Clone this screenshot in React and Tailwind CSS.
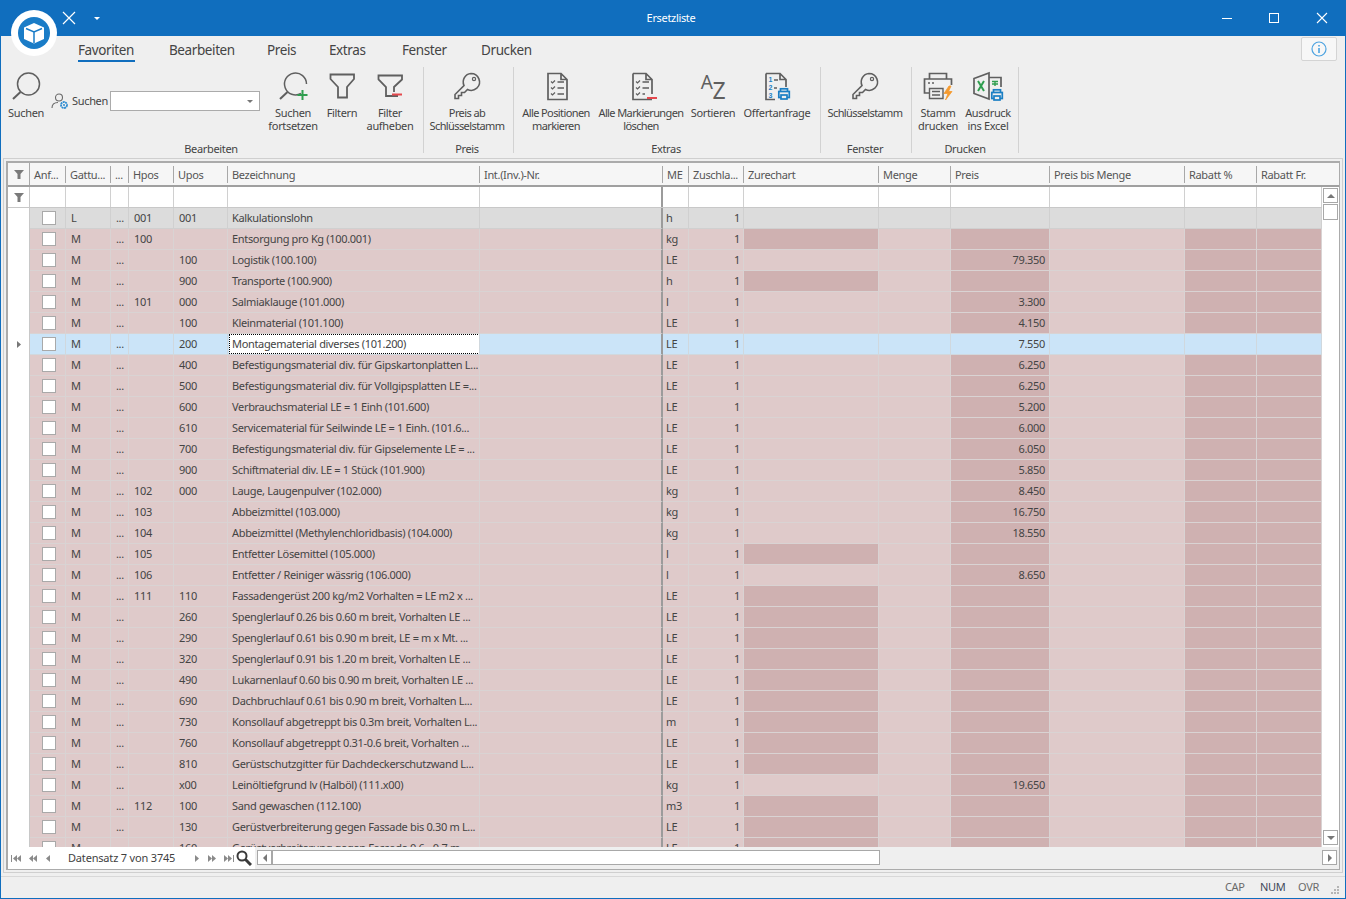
import React from 'react';

const COLS = 'grid-cols-[22px_36px_45px_18px_45px_54px_252px_183px_26px_55px_135px_72px_99px_135px_72px_65px]';

const HEADERS = ['Anf...', 'Gattu...', '...', 'Hpos', 'Upos', 'Bezeichnung', 'Int.(Inv.)-Nr.', 'ME', 'Zuschla...', 'Zurechart', 'Menge', 'Preis', 'Preis bis Menge', 'Rabatt %', 'Rabatt Fr.'];

// gattung, hpos, upos, bezeichnung, me, preis
const ROWS = [
  ['L', '001', '001', 'Kalkulationslohn', 'h', ''],
  ['M', '100', '', 'Entsorgung pro Kg (100.001)', 'kg', ''],
  ['M', '', '100', 'Logistik (100.100)', 'LE', '79.350'],
  ['M', '', '900', 'Transporte (100.900)', 'h', ''],
  ['M', '101', '000', 'Salmiaklauge (101.000)', 'l', '3.300'],
  ['M', '', '100', 'Kleinmaterial (101.100)', 'LE', '4.150'],
  ['M', '', '200', 'Montagematerial diverses (101.200)', 'LE', '7.550'],
  ['M', '', '400', 'Befestigungsmaterial div. für Gipskartonplatten L...', 'LE', '6.250'],
  ['M', '', '500', 'Befestigungsmaterial div. für Vollgipsplatten LE =...', 'LE', '6.250'],
  ['M', '', '600', 'Verbrauchsmaterial LE = 1 Einh (101.600)', 'LE', '5.200'],
  ['M', '', '610', 'Servicematerial für Seilwinde LE = 1 Einh. (101.6...', 'LE', '6.000'],
  ['M', '', '700', 'Befestigungsmaterial div. für Gipselemente LE = ...', 'LE', '6.050'],
  ['M', '', '900', 'Schiftmaterial div. LE = 1 Stück (101.900)', 'LE', '5.850'],
  ['M', '102', '000', 'Lauge, Laugenpulver (102.000)', 'kg', '8.450'],
  ['M', '103', '', 'Abbeizmittel (103.000)', 'kg', '16.750'],
  ['M', '104', '', 'Abbeizmittel (Methylenchloridbasis) (104.000)', 'kg', '18.550'],
  ['M', '105', '', 'Entfetter Lösemittel (105.000)', 'l', ''],
  ['M', '106', '', 'Entfetter / Reiniger wässrig (106.000)', 'l', '8.650'],
  ['M', '111', '110', 'Fassadengerüst 200 kg/m2 Vorhalten = LE m2 x ...', 'LE', ''],
  ['M', '', '260', 'Spenglerlauf 0.26 bis 0.60 m breit, Vorhalten LE ...', 'LE', ''],
  ['M', '', '290', 'Spenglerlauf 0.61 bis 0.90 m breit, LE = m x Mt. ...', 'LE', ''],
  ['M', '', '320', 'Spenglerlauf 0.91 bis 1.20 m breit, Vorhalten LE ...', 'LE', ''],
  ['M', '', '490', 'Lukarnenlauf 0.60 bis 0.90 m breit, Vorhalten LE ...', 'LE', ''],
  ['M', '', '690', 'Dachbruchlauf 0.61 bis 0.90 m breit, Vorhalten L...', 'LE', ''],
  ['M', '', '730', 'Konsollauf abgetreppt bis 0.3m breit, Vorhalten L...', 'm', ''],
  ['M', '', '760', 'Konsollauf abgetreppt 0.31-0.6 breit, Vorhalten ...', 'LE', ''],
  ['M', '', '810', 'Gerüstschutzgitter für Dachdeckerschutzwand L...', 'LE', ''],
  ['M', '', 'x00', 'Leinöltiefgrund lv (Halböl) (111.x00)', 'kg', '19.650'],
  ['M', '112', '100', 'Sand gewaschen (112.100)', 'm3', ''],
  ['M', '', '130', 'Gerüstverbreiterung gegen Fassade bis 0.30 m L...', 'LE', ''],
  ['M', '', '160', 'Gerüstverbreiterung gegen Fassade 0.6 - 0.7 m...', 'LE', ''],
];

const SELECTED = 6;

const Svg = ({ children, w = 32, h = 32, className = '' }) => (
  <svg width={w} height={h} viewBox={`0 0 ${w} ${h}`} fill="none" stroke="#5f5f5f" strokeWidth="1.5" className={className}>
    {children}
  </svg>
);

const SearchIcon = () => (
  <Svg>
    <circle cx="18.5" cy="14" r="11" />
    <path d="M10.5 22 3 29" strokeWidth="2" />
  </Svg>
);

const SearchPlusIcon = () => (
  <Svg>
    <path d="M24 23.5A11 11 0 1 1 29.5 14" />
    <path d="M10.5 22 3 29" strokeWidth="2" />
    <path d="M25.5 20v10M20.5 25h10" stroke="#2f9e4f" strokeWidth="2" />
  </Svg>
);

const FunnelIcon = () => (
  <Svg>
    <path d="M4.5 4.5H28V9L21 17V27.5H12V17L4.5 9Z" strokeWidth="1.8" />
  </Svg>
);

const FunnelMinusIcon = () => (
  <Svg>
    <path d="M27 25H15V16L7.5 8.5V4.5H31V8.5L23 16V21" strokeWidth="1.8" transform="translate(-3 1)" />
    <path d="M18 24.5H28" stroke="#e5484d" strokeWidth="2" />
  </Svg>
);

const KeyIcon = () => (
  <Svg>
    <path d="M20 3.5a8.5 8.5 0 0 1 5.8 14.700 8.5 8.5 0 0 1-9.300 1.300L13.500 22.500h-3v3h-3v3H4V24.500L13 15.500a8.500 8.500 0 0 1 7-12Z" strokeWidth="1.6" />
    <circle cx="23" cy="9" r="1.6" strokeWidth="1.2" />
  </Svg>
);

const DocShape = () => <path d="M8 3.5H21L27 9.5V29.5H8Z M21 3.5V9.5H27" strokeWidth="1.7" />;

const CheckLines = () => (
  <>
    <path d="M11 11.5l1.5 1.5 2.5-2.5M11 17.5l1.5 1.5 2.5-2.5M11 23.5l1.5 1.5 2.5-2.5" strokeWidth="1.2" />
    <path d="M17.5 12H24M17.5 18H24M17.5 24H24" />
  </>
);

const ChecklistIcon = () => (
  <Svg>
    <DocShape />
    <CheckLines />
  </Svg>
);

const ChecklistMinusIcon = () => (
  <Svg>
    <path d="M8 3.5H21L27 9.5V24 M27 29.5H8V3.5 M21 3.5V9.5H27" strokeWidth="1.7" />
    <path d="M11 11.5l1.5 1.5 2.5-2.5M11 17.5l1.5 1.5 2.5-2.5M11 23.5l1.5 1.5 2.5-2.5" strokeWidth="1.2" />
    <path d="M17.5 12H24M17.5 18H24M17.5 24H20" />
    <path d="M22 28H32" stroke="#e5484d" strokeWidth="2" />
  </Svg>
);

const PrinterBlue = ({ x, y }) => (
  <g transform={`translate(${x} ${y})`} stroke="#1b7fc4" strokeWidth="1.7">
    <rect x="2.5" y="0.8" width="7" height="3" fill="#efefef" />
    <rect x="0.8" y="3.5" width="10.5" height="6" fill="#efefef" />
    <rect x="3" y="7" width="6" height="4" fill="#efefef" />
  </g>
);

const OfferIcon = () => (
  <Svg>
    <path d="M5 3.5H19L25 9.5V17 M14 29.5H5V3.5 M19 3.5V9.5H25" strokeWidth="1.7" />
    <text x="7.5" y="12" fontSize="7" fontWeight="700" fill="#1b7fc4" stroke="none" fontFamily="Liberation Sans">1</text>
    <text x="7.5" y="20" fontSize="7" fontWeight="700" fill="#1b7fc4" stroke="none" fontFamily="Liberation Sans">2</text>
    <text x="7.5" y="28" fontSize="7" fontWeight="700" fill="#1b7fc4" stroke="none" fontFamily="Liberation Sans">3</text>
    <path d="M13 10H17M13 18H16" strokeWidth="1.4" />
    <PrinterBlue x="17" y="18" />
  </Svg>
);

const PrinterBoltIcon = () => (
  <Svg>
    <path d="M7.5 9V3.5H24.5V9" strokeWidth="1.7" />
    <path d="M7.5 23H2.5V9H29.5V15" strokeWidth="1.7" />
    <path d="M7.5 18.5H21V28.5H7.5Z M10 21.5H18M10 25H18" strokeWidth="1.4" />
    <path d="M6 13H8M10 13H12" strokeWidth="1.4" />
    <path d="M27 16L22 23.5H26L23.5 30L30 21.5H26.5L29 16Z" fill="#f59a2f" stroke="#f59a2f" strokeWidth="0.8" />
  </Svg>
);

const ExcelIcon = () => (
  <Svg>
    <path d="M2 8.5L17 3V29L2 23.5Z" strokeWidth="1.7" />
    <path d="M17 7.5H29V17" strokeWidth="1.7" />
    <path d="M6 11L12 21M12 11L6 21" stroke="#2f9e4f" strokeWidth="2" />
    <path d="M20 11.5H26M23 11.5V16M20 14H26" stroke="#2f9e4f" strokeWidth="1.4" />
    <PrinterBlue x="19" y="19" />
  </Svg>
);

const PersonGearIcon = () => (
  <svg width="18" height="18" viewBox="0 0 18 18" fill="none" stroke="#6a6a6a" strokeWidth="1.1" className="shrink-0">
    <circle cx="8" cy="5.5" r="3.5" />
    <path d="M1 16c0-3.500 2.500-5.500 6-5.500" />
    <circle cx="13" cy="13" r="3" stroke="#2d8bd0" strokeWidth="1.8" strokeDasharray="2 0.5" />
    <circle cx="13" cy="13" r="1" fill="#2d8bd0" stroke="none" />
  </svg>
);

const AzIcon = () => (
  <div className="flex h-[32px] w-[30px] items-start justify-center text-[#5f5f5f]">
    <span className="text-[19px] leading-[24px]">A</span>
    <span className="mt-[8px] text-[23px] leading-[24px]">Z</span>
  </div>
);

const RibbonButton = ({ icon, label, width, tight = false }) => (
  <div className={`flex shrink-0 flex-col items-center ${width}`}>
    <div className="flex h-[37px] items-center justify-center">{icon}</div>
    <div className={`mt-[2px] whitespace-pre text-center leading-[13px] ${tight ? 'tracking-[-0.6px]' : ''}`}>{label}</div>
  </div>
);

const RibbonGroup = ({ title, width, children }) => (
  <div className={`flex h-[86px] shrink-0 flex-col border-r border-[#d2d2d2] ${width}`}>
    <div className="flex h-[75px] shrink-0 justify-center">{children}</div>
    <div className="h-[11px] text-center leading-[14px]">{title}</div>
  </div>
);

const HeaderFilter = () => (
  <svg width="10" height="9" viewBox="0 0 10 9" className="mx-auto">
    <path d="M0 0H10L6.5 4V9H3.5V4Z" fill="#7a7a7a" />
  </svg>
);

const Arrow = ({ dir = 'left', bar = false, double = false, color = '#8a8a8a' }) => {
  const left = dir === 'left';
  const tri = (x) => (left ? `M${x + 4} 0V7L${x} 3.5Z` : `M${x} 0V7L${x + 4} 3.5Z`);
  const w = 4 + (double ? 4 : 0) + (bar ? 2 : 0);
  const start = bar && left ? 2 : 0;
  return (
    <svg width={w} height="7" viewBox={`0 0 ${w} 7`} fill={color}>
      <path d={tri(start)} />
      {double && <path d={tri(start + 4)} />}
      {bar && <rect x={left ? 0 : w - 1} y="0" width="1" height="7" />}
    </svg>
  );
};

const ScrollButton = ({ dir }) => (
  <div className="flex h-[15px] w-[15px] items-center justify-center border border-[#a8a8a8] bg-white">
    {dir === 'up' && <div className="h-0 w-0 border-x-[4px] border-b-[4px] border-x-transparent border-b-[#777]" />}
    {dir === 'down' && <div className="h-0 w-0 border-x-[4px] border-t-[4px] border-x-transparent border-t-[#777]" />}
    {dir === 'left' && <div className="h-0 w-0 border-y-[4px] border-r-[4px] border-y-transparent border-r-[#777]" />}
    {dir === 'right' && <div className="h-0 w-0 border-y-[4px] border-l-[4px] border-y-transparent border-l-[#777]" />}
  </div>
);

const GridRow = ({ row, index }) => {
  const [gattung, hpos, upos, text, me, preis] = row;
  const selected = index === SELECTED;
  const grey = gattung === 'L';

  let light = 'bg-[#dfcaca] border-[#d9d3d3]';
  let dark = 'bg-[#cfb1b1] border-[#d9d3d3]';
  if (grey) {
    light = 'bg-[#dcdcdc] border-[#d0d0d0]';
    dark = light;
  }
  if (selected) {
    light = 'bg-[#cbe4f8] border-[#d0d8de]';
    dark = light;
  }
  const cell = `h-[21px] overflow-hidden whitespace-nowrap border-b border-r leading-[20px] ${light}`;
  const darkCell = `h-[21px] overflow-hidden whitespace-nowrap border-b border-r pr-[4px] text-right leading-[20px] ${dark}`;

  return (
    <div className={`grid ${COLS}`}>
      <div className="flex h-[21px] items-center justify-center border-r border-[#c8c8c8] bg-white">
        {selected && <Arrow dir="right" color="#777" />}
      </div>
      <div className={`${cell} flex items-center justify-center pl-[2px]`}>
        <div className="h-[14px] w-[14px] border border-[#a9a9a9] bg-white" />
      </div>
      <div className={`${cell} pl-[5px]`}>{gattung}</div>
      <div className={`${cell} pl-[5px]`}>...</div>
      <div className={`${cell} pl-[5px]`}>{hpos}</div>
      <div className={`${cell} pl-[5px]`}>{upos}</div>
      <div className={`${cell} pl-[4px]`}>
        {selected ? (
          <div className="-ml-[3px] -mr-px h-[20px] overflow-hidden border border-dotted border-black bg-white pl-[2px] leading-[18px]">{text}</div>
        ) : (
          text
        )}
      </div>
      <div className={`${cell} border-r-2 border-r-[#9b9b9b]`} />
      <div className={`${cell} pl-[3px]`}>{me}</div>
      <div className={`${cell} pr-[3px] text-right`}>1</div>
      <div className={preis ? cell : darkCell} />
      <div className={cell} />
      <div className={darkCell}>{preis}</div>
      <div className={cell} />
      <div className={darkCell} />
      <div className={darkCell} />
    </div>
  );
};

const App = () => {
  return (
    <div className="flex h-[899px] w-[1346px] flex-col overflow-hidden border-x border-b border-[#106ebe] bg-[#efefef] font-['Noto_Sans','Open_Sans',sans-serif] text-[11px] tracking-[-0.33px] text-[#444]">
      {/* title bar */}
      <div className="relative -mx-px flex h-[36px] shrink-0 items-center bg-[#106ebe] text-white">
        <svg width="14" height="14" viewBox="0 0 14 14" stroke="#fff" strokeWidth="1.2" className="ml-[62px]">
          <path d="M1 1L13 13M13 1L1 13" />
        </svg>
        <div className="ml-[18px] h-0 w-0 border-x-[3px] border-t-[3px] border-x-transparent border-t-white" />
        <div className="flex-1 text-center text-[11px]">
          <span className="relative left-[10px]">Ersetzliste</span>
        </div>
        <div className="h-px w-[10px] bg-white" />
        <div className="ml-[37px] h-[10px] w-[10px] border border-white" />
        <svg width="12" height="12" viewBox="0 0 12 12" stroke="#fff" strokeWidth="1.1" className="ml-[37px] mr-[18px]">
          <path d="M1 1L11 11M11 1L1 11" />
        </svg>
        {/* app logo */}
        <div className="absolute left-[11px] top-[10px] flex h-[46px] w-[46px] items-center justify-center rounded-full bg-white">
          <svg width="32" height="32" viewBox="0 0 32 32">
            <circle cx="16" cy="16" r="16" fill="#1a7cc7" />
            <path d="M16 6L26 10.5V22L16 26.5L6 22V10.5Z" fill="#fff" />
            <path d="M8 11.500L16 15L24 11.500M16 15V26" stroke="#1a7cc7" strokeWidth="1.5" fill="none" />
          </svg>
        </div>
      </div>

      {/* tabs */}
      <div className="flex h-[28px] shrink-0 items-start pl-[77px] text-[13.5px] tracking-[-0.4px]">
        <div className="mr-[34px] mt-[4px] w-[57px] whitespace-nowrap border-b-2 border-[#106ebe] leading-[20px]">Favoriten</div>
        <div className="mr-[34px] mt-[4px] w-[64px] whitespace-nowrap leading-[20px]">Bearbeiten</div>
        <div className="mr-[33px] mt-[4px] w-[29px] whitespace-nowrap leading-[20px]">Preis</div>
        <div className="mr-[33px] mt-[4px] w-[40px] whitespace-nowrap leading-[20px]">Extras</div>
        <div className="mr-[34px] mt-[4px] w-[45px] whitespace-nowrap leading-[20px]">Fenster</div>
        <div className="mt-[4px] w-[52px] whitespace-nowrap leading-[20px]">Drucken</div>
        <div className="ml-auto mr-[8px] mt-px flex h-[24px] w-[36px] items-center justify-center rounded-[2px] border border-[#d4d4d4] bg-[#f7f7f7]">
          <svg width="16" height="16" viewBox="0 0 16 16" fill="none" stroke="#4da3e0" strokeWidth="1.2">
            <circle cx="8" cy="8" r="7" />
            <path d="M8 7V12M8 4V5.5" strokeWidth="1.6" />
          </svg>
        </div>
      </div>

      {/* ribbon */}
      <div className="flex h-[94px] shrink-0 pl-[2px] pt-[3px]">
        <RibbonGroup title="Bearbeiten" width="w-[421px] pr-[4px]">
          <RibbonButton icon={<SearchIcon />} label="Suchen" width="w-[46px]" />
          <div className="flex w-[215px] shrink-0 items-start">
            <div className="mt-[24px] flex items-center pl-[2px]">
              <PersonGearIcon />
              <span className="ml-[3px] w-[37px]">Suchen</span>
              <div className="ml-px flex h-[20px] w-[150px] items-center justify-end border border-[#ababab] bg-white pr-[6px]">
                <div className="h-0 w-0 border-x-[3px] border-t-[3px] border-x-transparent border-t-[#777]" />
              </div>
            </div>
          </div>
          <RibbonButton icon={<SearchPlusIcon />} label={'Suchen\nfortsetzen'} width="w-[58px]" />
          <RibbonButton icon={<FunnelIcon />} label="Filtern" width="w-[40px]" />
          <RibbonButton icon={<FunnelMinusIcon />} label={'Filter\naufheben'} width="w-[56px]" />
          <div className="flex-1" />
        </RibbonGroup>
        <RibbonGroup title="Preis" width="w-[90px] pr-[3px]">
          <RibbonButton icon={<KeyIcon />} label={'Preis ab\nSchlüsselstamm'} width="w-[86px]" tight />
        </RibbonGroup>
        <RibbonGroup title="Extras" width="w-[307px] pr-[2px]">
          <div className="w-[3px] shrink-0" />
          <RibbonButton icon={<ChecklistIcon />} label={'Alle Positionen\nmarkieren'} width="w-[78px]" tight />
          <RibbonButton icon={<ChecklistMinusIcon />} label={'Alle Markierungen\nlöschen'} width="w-[92px]" tight />
          <RibbonButton icon={<AzIcon />} label="Sortieren" width="w-[52px]" />
          <RibbonButton icon={<OfferIcon />} label="Offertanfrage" width="w-[76px]" />
          <div className="flex-1" />
        </RibbonGroup>
        <RibbonGroup title="Fenster" width="w-[91px] pr-[2px]">
          <RibbonButton icon={<KeyIcon />} label="Schlüsselstamm" width="w-[88px]" tight />
        </RibbonGroup>
        <RibbonGroup title="Drucken" width="w-[107px]">
          <RibbonButton icon={<PrinterBoltIcon />} label={'Stamm\ndrucken'} width="w-[52px]" />
          <RibbonButton icon={<ExcelIcon />} label={'Ausdruck\nins Excel'} width="w-[48px]" />
          <div className="flex-1" />
        </RibbonGroup>
      </div>

      {/* grid frame */}
      <div className="mx-[2px] flex min-h-0 flex-1 flex-col border border-[#cfcfcf] p-[2px]">
        <div className="flex min-h-0 flex-1 flex-col border-b border-r border-l-2 border-t-2 border-[#ababab] bg-white">
          {/* column header */}
          <div className="grid h-[24px] shrink-0 grid-cols-[22px_36px_45px_18px_45px_54px_252px_183px_26px_55px_135px_72px_99px_135px_72px_65px_17px] border-b-2 border-[#a0a0a0] bg-[#f6f6f6]">
            <div className="flex items-center border-r border-[#a8a8a8] pt-px">
              <HeaderFilter />
            </div>
            {HEADERS.map((h, i) => (
              <div key={i} className={`mb-[2px] mt-[3px] overflow-hidden whitespace-nowrap border-[#a8a8a8] pl-[4px] leading-[18px] text-[#555] ${i === 14 ? '' : 'border-r'}`}>
                {h}
              </div>
            ))}
            <div />
          </div>

          {/* rows and vertical scrollbar */}
          <div className="flex min-h-0 flex-1">
            <div className="min-w-0 flex-1 overflow-hidden">
              <div className={`grid h-[21px] ${COLS} border-b border-[#c8c8c8]`}>
                <div className="flex items-center border-r border-[#c8c8c8]">
                  <HeaderFilter />
                </div>
                {HEADERS.map((h, i) => (
                  <div key={i} className={`border-r border-[#d0d0d0] ${i === 6 ? 'border-r-2 border-r-[#9b9b9b]' : ''}`} />
                ))}
              </div>
              {ROWS.map((row, i) => (
                <GridRow key={i} row={row} index={i} />
              ))}
            </div>
            <div className="flex w-[17px] shrink-0 flex-col items-center bg-white pt-px">
              <ScrollButton dir="up" />
              <div className="mt-px h-[16px] w-[15px] border border-[#a8a8a8] bg-white" />
              <div className="flex-1" />
              <div className="mb-[2px]">
                <ScrollButton dir="down" />
              </div>
            </div>
          </div>

          {/* record navigator and horizontal scrollbar */}
          <div className="flex h-[22px] shrink-0 bg-[#efefef] pb-[3px]">
            <div className="-mb-[3px] flex w-[247px] shrink-0 items-center bg-white pl-[3px]">
              <Arrow dir="left" bar double />
              <div className="w-[8px]" />
              <Arrow dir="left" double />
              <div className="w-[9px]" />
              <Arrow dir="left" />
              <span className="ml-[18px] w-[127px] whitespace-nowrap tracking-[-0.18px] text-[#3f3f3f]">Datensatz 7 von 3745</span>
              <Arrow dir="right" />
              <div className="w-[9px]" />
              <Arrow dir="right" double />
              <div className="w-[8px]" />
              <Arrow dir="right" bar double />
              <svg width="16" height="16" viewBox="0 0 16 16" fill="none" stroke="#3a3a3a" className="ml-[2px]">
                <circle cx="6" cy="6" r="4.5" strokeWidth="2" />
                <path d="M9.5 9.5L15 15" strokeWidth="3" />
              </svg>
            </div>
            <div className="ml-[2px] mt-[3px] flex h-[15px]">
              <ScrollButton dir="left" />
              <div className="h-[15px] w-[608px] border border-[#a8a8a8] bg-white" />
            </div>
            <div className="flex-1" />
            <div className="mr-[2px] mt-[3px]">
              <ScrollButton dir="right" />
            </div>
          </div>
        </div>
      </div>

      {/* status bar */}
      <div className="mt-[3px] flex h-[22px] shrink-0 items-center border-t border-[#d8d8d8] text-[#6a6a6a]">
        <div className="flex-1" />
        <span className="w-[22px] whitespace-nowrap">CAP</span>
        <span className="ml-[13px] w-[25px] whitespace-nowrap text-[#3f4a5a]">NUM</span>
        <span className="ml-[13px] w-[24px] whitespace-nowrap">OVR</span>
        <svg width="10" height="10" viewBox="0 0 10 10" fill="#b5b5b5" className="ml-[8px] mr-[5px] mt-[4px]">
          <rect x="7" y="1" width="2" height="2" />
          <rect x="4" y="4" width="2" height="2" />
          <rect x="7" y="4" width="2" height="2" />
          <rect x="1" y="7" width="2" height="2" />
          <rect x="4" y="7" width="2" height="2" />
          <rect x="7" y="7" width="2" height="2" />
        </svg>
      </div>
    </div>
  );
};

export default App;
